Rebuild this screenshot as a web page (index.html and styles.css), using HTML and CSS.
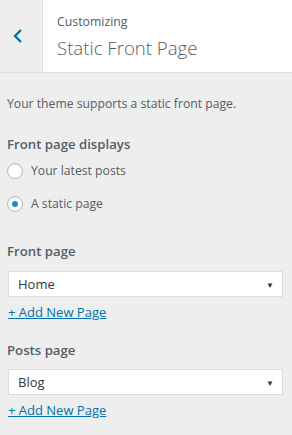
FILE: index.html
```html
<!DOCTYPE html>
<html lang="en">
<head>
    <meta charset="utf-8">
    <title>Static Front Page</title>
    <link rel="stylesheet" href="styles.css">
</head>
<body>
    <div class="header">
        <button class="back" type="button" aria-label="Back">
            <svg width="12" height="16" viewBox="0 0 12 16"><path d="M9 2 L3 8 L9 14" fill="none" stroke="#0073aa" stroke-width="2.4"/></svg>
        </button>
        <div class="title">
            <span class="crumb">Customizing</span>
            <h1>Static Front Page</h1>
        </div>
    </div>
    <div class="section">
        <p class="desc">Your theme supports a static front page.</p>

        <div class="control">
            <span class="label">Front page displays</span>
            <label class="radio"><span class="dot"></span>Your latest posts</label>
            <label class="radio"><span class="dot checked"></span>A static page</label>
        </div>

        <div class="control">
            <span class="label">Front page</span>
            <div class="select"><span>Home</span><span class="arrow">&#9660;</span></div>
            <a href="#" class="add">+ Add New Page</a>
        </div>

        <div class="control posts">
            <span class="label">Posts page</span>
            <div class="select"><span>Blog</span><span class="arrow">&#9660;</span></div>
            <a href="#" class="add">+ Add New Page</a>
        </div>
    </div>
</body>
</html>
```

FILE: styles.css
```css
body {
    margin: 0;
    background: #eeeeee;
    font-family: 'Open Sans', sans-serif;
    color: #555d66;
}
.header {
    display: flex;
    height: 72px;
    background: #fff;
    border-bottom: 1px solid #dddddd;
}
.back {
    width: 43px;
    border: none;
    border-right: 1px solid #dddddd;
    background: #eeeeee;
    padding: 0 6px 0 0;
    display: flex;
    align-items: center;
    justify-content: center;
}
.title {
    padding: 14px 0 0 14px;
}
.crumb {
    display: block;
    font-size: 12.3px;
    line-height: 16px;
}
h1 {
    margin: 6px 0 0;
    font-size: 18.6px;
    font-weight: 300;
    line-height: 24px;
}
.section {
    padding: 22px 9px 0 7px;
}
.desc {
    margin: 0;
    font-size: 12.2px;
    line-height: 18px;
}
.control {
    margin-top: 21px;
}
.control.posts {
    margin-top: 19px;
}
.label {
    display: block;
    font-size: 13.2px;
    font-weight: 600;
    line-height: 20px;
}
.radio {
    display: flex;
    align-items: center;
    font-size: 12.2px;
    height: 33px;
}
.dot {
    width: 14px;
    height: 14px;
    border: 1px solid #b4b9be;
    border-radius: 50%;
    background: #fff;
    margin-right: 8px;
    display: flex;
    align-items: center;
    justify-content: center;
    box-shadow: inset 0 1px 2px rgba(0,0,0,0.1);
}
.dot.checked::after {
    content: "";
    width: 6px;
    height: 6px;
    border-radius: 50%;
    background: #1e8cbe;
}
.select {
    margin: 10px 0 0 1px;
    height: 24px;
    border: 1px solid #dddddd;
    background: #fff;
    display: flex;
    align-items: center;
    justify-content: space-between;
    padding: 0 8px 0 9px;
    font-size: 13px;
    color: #32373c;
}
.posts .select {
    margin-top: 9px;
}
.arrow {
    font-size: 8px;
    color: #32373c;
}
.add {
    display: block;
    width: max-content;
    margin: 6px 0 0 1px;
    font-size: 13px;
    line-height: 18px;
    color: #0073aa;
}
```
